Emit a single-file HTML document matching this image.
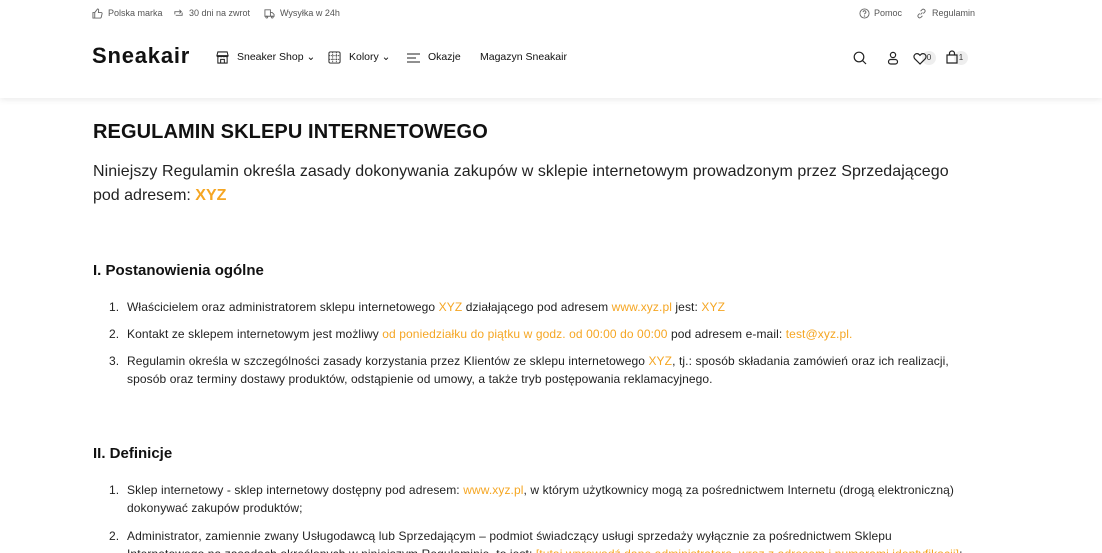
<!DOCTYPE html>
<html><head><meta charset="utf-8"><style>
*{margin:0;padding:0;box-sizing:border-box}
html,body{width:1102px;height:553px;overflow:hidden}
body{background:#fff;font-family:"Liberation Sans",sans-serif;color:#1a1a1a;position:relative}
.a{position:absolute;white-space:nowrap}
.top{font-size:9px;color:#555}
.nav{font-size:10.5px;color:#111}
.o{color:#f5a623}
.t{font-size:12px;color:#222;letter-spacing:0.1px}
header{position:absolute;left:0;top:0;width:1102px;height:98px;background:#fff;box-shadow:0 2px 6px rgba(0,0,0,.08);z-index:2}
svg{position:absolute}
.badge{position:absolute;width:14px;height:14px;border-radius:7px;background:#eee;font-size:8px;text-align:center;line-height:14px;color:#333}
</style></head><body>
<header>
<svg style="left:92px;top:8px" width="11" height="11" viewBox="0 0 12 12" fill="none" stroke="#666" stroke-width="1"><path d="M1 5h2v6H1zM3 5l3-4c1 0 1.5.7 1.2 2L7 5h3c.8 0 1.2.6 1 1.3l-1 4c-.2.5-.6.7-1 .7H3"/></svg>
<div class="a top" style="left:108px;top:8px">Polska marka</div>
<svg style="left:173px;top:8px" width="11" height="11" viewBox="0 0 12 12" fill="none" stroke="#666" stroke-width="1"><path d="M2 7V4h7M7 2l2 2-2 2M10 5v3H3"/></svg>
<div class="a top" style="left:189px;top:8px">30 dni na zwrot</div>
<svg style="left:264px;top:8px" width="11" height="11" viewBox="0 0 12 12" fill="none" stroke="#666" stroke-width="1"><path d="M1 2h6v7H1zM7 5h2l2 2v2H7"/><circle cx="3" cy="10" r="1"/><circle cx="9" cy="10" r="1"/></svg>
<div class="a top" style="left:280px;top:8px">Wysyłka w 24h</div>
<svg style="left:859px;top:8px" width="11" height="11" viewBox="0 0 12 12" fill="none" stroke="#666" stroke-width="1"><circle cx="6" cy="6" r="5"/><path d="M4.5 4.5a1.5 1.5 0 1 1 2 1.4c-.4.2-.5.5-.5 1"/><circle cx="6" cy="8.8" r=".3"/></svg>
<div class="a top" style="left:874px;top:8px">Pomoc</div>
<svg style="left:916px;top:8px" width="11" height="11" viewBox="0 0 12 12" fill="none" stroke="#666" stroke-width="1"><path d="M5 7l2-2M4 6L2.5 7.5a2 2 0 0 0 2.8 2.8L7 8.5M8 6l1.5-1.5a2 2 0 0 0-2.8-2.8L5 3.5"/></svg>
<div class="a top" style="left:932px;top:8px">Regulamin</div>

<div class="a" style="left:92px;top:43px;font-size:22px;font-weight:bold;letter-spacing:0.8px;color:#111">Sneakair</div>
<svg style="left:216px;top:51px" width="13" height="13" viewBox="0 0 14 14" fill="none" stroke="#222" stroke-width="1.1"><path d="M1 5l1-4h10l1 4zM2 5v8h10V5M5 13V9h4v4M1 5c0 1.5 3 1.5 3 0 0 1.5 3 1.5 3 0 0 1.5 3 1.5 3 0 0 1.5 3 1.5 3 0"/></svg>
<div class="a nav" style="left:237px;top:51px">Sneaker Shop ⌄</div>
<svg style="left:328px;top:51px" width="13" height="13" viewBox="0 0 14 14" fill="none" stroke="#222" stroke-width="1"><rect x="1" y="1" width="12" height="12" rx="1.5"/><path d="M1 5h12M1 9h12M5 1v12M9 1v12" stroke-dasharray="1 1"/></svg>
<div class="a nav" style="left:349px;top:51px">Kolory ⌄</div>
<svg style="left:407px;top:52px" width="13" height="11" viewBox="0 0 13 11" fill="none" stroke="#222" stroke-width="1.1"><path d="M0 2h13M0 6h9M0 10h13"/></svg>
<div class="a nav" style="left:428px;top:51px">Okazje</div>
<div class="a nav" style="left:480px;top:51px">Magazyn Sneakair</div>

<svg style="left:853px;top:51px" width="14" height="14" viewBox="0 0 14 14" fill="none" stroke="#222" stroke-width="1.2"><circle cx="6" cy="6" r="4.8"/><path d="M9.5 9.5L13 13"/></svg>
<svg style="left:886px;top:51px" width="14" height="14" viewBox="0 0 14 14" fill="none" stroke="#222" stroke-width="1.2"><circle cx="7" cy="4" r="2.6"/><rect x="2.5" y="8.5" width="9" height="4.5" rx="2.2"/></svg>
<div class="badge" style="left:922px;top:51px">0</div>
<svg style="left:913px;top:52px" width="14" height="13" viewBox="0 0 14 13" fill="none" stroke="#222" stroke-width="1.2"><path d="M7 12L1.8 6.8a3 3 0 0 1 4.4-4.2L7 3.4l.8-.8a3 3 0 0 1 4.4 4.2z"/></svg>
<div class="badge" style="left:954px;top:51px">1</div>
<svg style="left:945px;top:50px" width="14" height="14" viewBox="0 0 14 14" fill="none" stroke="#222" stroke-width="1.2"><path d="M2 5h10v8H2zM4.5 5V3.5a2.5 2.5 0 0 1 5 0V5"/></svg>
</header>

<div class="a" style="left:93px;top:121px;font-size:20px;font-weight:bold;color:#111;letter-spacing:0.1px">REGULAMIN SKLEPU INTERNETOWEGO</div>
<div class="a" style="left:93px;top:163px;font-size:16px;color:#222;letter-spacing:0.05px">Niniejszy Regulamin określa zasady dokonywania zakupów w sklepie internetowym prowadzonym przez Sprzedającego</div>
<div class="a" style="left:93px;top:187px;font-size:16px;color:#222">pod adresem: <b class="o">XYZ</b></div>

<div class="a" style="left:93px;top:262px;font-size:15px;font-weight:bold;color:#111">I. Postanowienia ogólne</div>
<div class="a t" style="left:109px;top:300px">1.</div>
<div class="a t" style="left:127px;top:300px">Właścicielem oraz administratorem sklepu internetowego <span class="o">XYZ</span> działającego pod adresem <span class="o">www.xyz.pl</span> jest: <span class="o">XYZ</span></div>
<div class="a t" style="left:109px;top:327px">2.</div>
<div class="a t" style="left:127px;top:327px">Kontakt ze sklepem internetowym jest możliwy <span class="o">od poniedziałku do piątku w godz. od 00:00 do 00:00</span> pod adresem e-mail: <span class="o">test@xyz.pl.</span></div>
<div class="a t" style="left:109px;top:354px">3.</div>
<div class="a t" style="left:127px;top:354px">Regulamin określa w szczególności zasady korzystania przez Klientów ze sklepu internetowego <span class="o">XYZ</span>, tj.: sposób składania zamówień oraz ich realizacji,</div>
<div class="a t" style="left:127px;top:372px">sposób oraz terminy dostawy produktów, odstąpienie od umowy, a także tryb postępowania reklamacyjnego.</div>

<div class="a" style="left:93px;top:445px;font-size:15px;font-weight:bold;color:#111">II. Definicje</div>
<div class="a t" style="left:109px;top:483px">1.</div>
<div class="a t" style="left:127px;top:483px">Sklep internetowy - sklep internetowy dostępny pod adresem: <span class="o">www.xyz.pl</span>, w którym użytkownicy mogą za pośrednictwem Internetu (drogą elektroniczną)</div>
<div class="a t" style="left:127px;top:501px">dokonywać zakupów produktów;</div>
<div class="a t" style="left:109px;top:529px">2.</div>
<div class="a t" style="left:127px;top:529px">Administrator, zamiennie zwany Usługodawcą lub Sprzedającym – podmiot świadczący usługi sprzedaży wyłącznie za pośrednictwem Sklepu</div>
<div class="a t" style="left:127px;top:547px">Internetowego na zasadach określonych w niniejszym Regulaminie, to jest: <span class="o">[tutaj wprowadź dane administratora, wraz z adresem i numerami identyfikacji]</span>;</div>
</body></html>
